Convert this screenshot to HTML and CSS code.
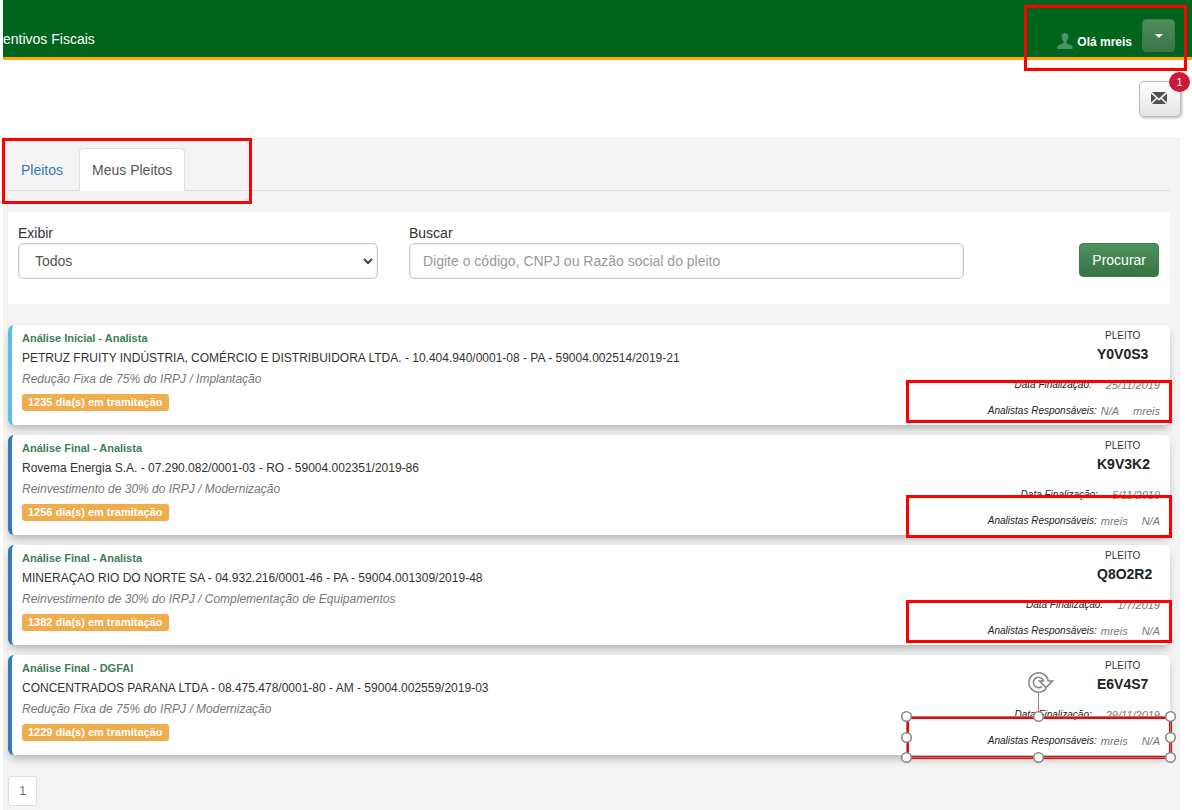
FILE: index.html
```html
<!DOCTYPE html>
<html lang="pt-BR">
<head>
<meta charset="utf-8">
<title>Incentivos Fiscais - Meus Pleitos</title>
<link rel="stylesheet" href="styles.css">
</head>
<body>
<header class="topbar">
  <span class="brand">entivos Fiscais</span>
  <div class="user">
    <svg class="user-icon" viewBox="0 0 16 16" aria-hidden="true"><path d="M8 0C5.700 0 4.600 1.600 4.700 3.800C4.800 5.800 5.600 7.300 6.400 8.200V10C6.300 11 1 11.500 .4 13.500V16H15.600V13.500C15 11.500 9.700 11 9.600 10V8.200C10.400 7.300 11.200 5.800 11.300 3.800C11.400 1.600 10.300 0 8 0Z"/></svg>
    <span class="hello">Olá mreis</span>
    <button class="user-menu" type="button" aria-label="Menu do usuário"><span class="caret"></span></button>
  </div>
  <div class="mark mark-user"></div>
</header>

<div class="tools">
  <button class="mail" type="button" aria-label="Mensagens">
    <svg viewBox="0 0 16 14" aria-hidden="true"><path d="M1 1H15L8 7.500ZM0 2.500L5 7L0 11.500ZM16 2.500L11 7L16 11.500ZM1 13L6 8L8 9.800L10 8L15 13Z"/></svg>
    <span class="badge">1</span>
  </button>
</div>

<main class="panel">
  <nav class="tabs">
    <a class="tab" href="#pleitos">Pleitos</a>
    <a class="tab active" href="#meus" aria-current="page">Meus Pleitos</a>
    <div class="mark mark-tabs"></div>
  </nav>

  <form class="filter">
    <div class="cell">
      <label for="exibir">Exibir</label>
      <div class="select-wrap">
        <select class="field" id="exibir"><option>Todos</option></select>
        <svg class="chevron" viewBox="0 0 10 7" aria-hidden="true"><path d="M1 1L5 5L9 1"/></svg>
      </div>
    </div>
    <div class="cell">
      <label for="buscar">Buscar</label>
      <input class="field" id="buscar" type="text" placeholder="Digite o código, CNPJ ou Razão social do pleito">
    </div>
    <div class="cell action">
      <button class="search" type="button">Procurar</button>
    </div>
  </form>

  <section class="cards">
    <article class="card initial">
      <div class="info">
        <div class="status">Análise Inicial - Analista</div>
        <div class="company">PETRUZ FRUITY INDÚSTRIA, COMÉRCIO E DISTRIBUIDORA LTDA. - 10.404.940/0001-08 - PA - <span class="process">59004.002514/2019-21</span></div>
        <div class="kind">Redução Fixa de 75% do IRPJ / Implantação</div>
        <span class="days">1235 dia(s) em tramitação</span>
      </div>
      <div class="side">
        <div class="code-title">PLEITO</div>
        <div class="code">Y0V0S3</div>
        <div class="meta date"><span class="key">Data Finalização:</span><span>25/11/2019</span></div>
        <div class="meta people"><span class="key">Analistas Responsáveis:</span><span>N/A</span><span class="second">mreis</span></div>
      </div>
      <div class="mark mark-card high"></div>
    </article>

    <article class="card">
      <div class="info">
        <div class="status">Análise Final - Analista</div>
        <div class="company">Rovema Energia S.A. - 07.290.082/0001-03 - RO - <span class="process">59004.002351/2019-86</span></div>
        <div class="kind">Reinvestimento de 30% do IRPJ / Modernização</div>
        <span class="days">1256 dia(s) em tramitação</span>
      </div>
      <div class="side">
        <div class="code-title">PLEITO</div>
        <div class="code">K9V3K2</div>
        <div class="meta date"><span class="key">Data Finalização:</span><span>5/11/2019</span></div>
        <div class="meta people"><span class="key">Analistas Responsáveis:</span><span>mreis</span><span class="second">N/A</span></div>
      </div>
      <div class="mark mark-card low"></div>
    </article>

    <article class="card">
      <div class="info">
        <div class="status">Análise Final - Analista</div>
        <div class="company">MINERAÇAO RIO DO NORTE SA - 04.932.216/0001-46 - PA - <span class="process">59004.001309/2019-48</span></div>
        <div class="kind">Reinvestimento de 30% do IRPJ / Complementação de Equipamentos</div>
        <span class="days">1382 dia(s) em tramitação</span>
      </div>
      <div class="side">
        <div class="code-title">PLEITO</div>
        <div class="code">Q8O2R2</div>
        <div class="meta date"><span class="key">Data Finalização:</span><span>1/7/2019</span></div>
        <div class="meta people"><span class="key">Analistas Responsáveis:</span><span>mreis</span><span class="second">N/A</span></div>
      </div>
      <div class="mark mark-card high"></div>
    </article>

    <article class="card">
      <div class="info">
        <div class="status">Análise Final - DGFAI</div>
        <div class="company">CONCENTRADOS PARANA LTDA - 08.475.478/0001-80 - AM - <span class="process">59004.002559/2019-03</span></div>
        <div class="kind">Redução Fixa de 75% do IRPJ / Modernização</div>
        <span class="days">1229 dia(s) em tramitação</span>
      </div>
      <div class="side">
        <div class="code-title">PLEITO</div>
        <div class="code">E6V4S7</div>
        <div class="meta date"><span class="key">Data Finalização:</span><span>29/11/2019</span></div>
        <div class="meta people"><span class="key">Analistas Responsáveis:</span><span>mreis</span><span class="second">N/A</span></div>
      </div>
      <svg class="selection" viewBox="0 0 276 96" aria-hidden="true">
        <rect class="sel-red" x="7.500" y="49.500" width="263" height="40"/>
        <path class="sel-line" d="M6 48.500H270.500V89.500H6.500V48.500M138.500 24V48"/>
        <g class="handles">
          <circle cx="6.500" cy="48.500" r="4.800"/><circle cx="138.500" cy="48.500" r="4.800"/><circle cx="270.500" cy="48.500" r="4.800"/>
          <circle cx="6.500" cy="69.500" r="4.800"/><circle cx="270.500" cy="69.500" r="4.800"/>
          <circle cx="6.500" cy="89.500" r="4.800"/><circle cx="138.500" cy="89.500" r="4.800"/><circle cx="270.500" cy="89.500" r="4.800"/>
        </g>
        <circle class="rot-base" cx="138.500" cy="14.500" r="7.500"/>
        <path class="rot" d="M146.300 20.500A9.700 9.700 0 1 1 148.200 13H152.500L146 19.500L139.500 13H143.500A5.200 5.200 0 1 0 142 18.300"/>
      </svg>
    </article>
  </section>

  <nav class="pages" aria-label="Paginação"><a class="page" href="#1">1</a></nav>
</main>
</body>
</html>
```
FILE: styles.css
```css
* { box-sizing: border-box; }

body {
  margin: 0;
  padding-left: 3px;
  min-height: 100vh;
  display: flex;
  flex-direction: column;
  background: #fff;
  color: #333;
  font: 14px/20px "Liberation Sans", Arial, sans-serif;
}

button { font: inherit; cursor: pointer; }

.topbar {
  position: relative;
  display: flex;
  justify-content: space-between;
  align-items: flex-start;
  padding: 19px 17px 5px 0;
  background: #00641c;
  border-bottom: 3px solid #fa0;
  color: #fff;
}
.brand { padding-top: 10px; }
.user { display: flex; align-items: flex-start; }
.user-icon { width: 16px; height: 16px; margin: 14px 4px 0 0; fill: #4b9461; }
.hello { padding-top: 13px; font-size: 12px; font-weight: bold; }
.user-menu {
  width: 33px;
  height: 33px;
  margin-left: 10px;
  padding: 0;
  border: 1px solid #3e7d4b;
  border-radius: 4px;
  background: linear-gradient(#4d8e5b, #3b7547);
}
.caret {
  display: block;
  width: 8px;
  margin: 0 auto;
  border: 4px solid transparent;
  border-top-color: #fff;
  border-bottom: 0;
}

/* Red highlight frames laid over the page */
.mark { position: absolute; border: 3px solid #f00; pointer-events: none; z-index: 2; }
.mark-user { right: 5px; top: 5px; width: 163px; height: 66px; }
.mark-tabs { left: -6px; top: -10px; width: 250px; height: 66px; }
.mark-card { right: -2px; width: 266px; height: 43px; }
.mark-card.high { top: 55px; }
.mark-card.low { top: 60px; }

.tools { display: flex; justify-content: flex-end; padding: 21px 11px 20px 0; }
.mail {
  position: relative;
  width: 42px;
  height: 36px;
  padding: 0 2px 2px 0;
  border: 1px solid #bbb;
  border-radius: 5px;
  background: linear-gradient(#fff, #e4e4e4);
  box-shadow: 1px 1px 3px rgba(0, 0, 0, .3);
}
.mail svg { display: block; width: 16px; height: 14px; margin: 0 auto; fill: #505056; }
.badge {
  position: absolute;
  top: -10px;
  right: -10px;
  width: 21px;
  height: 20px;
  border-radius: 50%;
  background: #cb1a36;
  color: #fff;
  font-size: 11px;
  line-height: 20px;
}

.panel { flex: 1; margin-right: 12px; padding: 11px 10px 4px 5px; background: #f4f4f4; }

.tabs { position: relative; display: flex; border-bottom: 1px solid #ddd; }
.tab {
  padding: 11px 12px 10px;
  border: 1px solid transparent;
  border-bottom: 0;
  border-radius: 4px 4px 0 0;
  line-height: 20px;
  color: #337ab7;
  text-decoration: none;
}
.tab.active { margin: 0 0 -1px 3px; border-color: #ddd; background: #fff; color: #555; }

.filter {
  display: grid;
  grid-template-columns: 360fr 555fr 164fr;
  gap: 31px;
  margin-top: 21px;
  padding: 11px 11px 25px 10px;
  background: #fff;
}
.cell { min-width: 0; }
.cell label { display: block; }
.select-wrap { position: relative; }
.field {
  display: block;
  width: 100%;
  height: 36px;
  padding: 0 13px;
  border: 1px solid #ccc;
  border-radius: 5px;
  background: #fff;
  box-shadow: inset 0 0 1px 1px #eee;
  color: #555;
  font: inherit;
  appearance: none;
}
select.field { padding: 0 16px; }
.field::placeholder { color: #999; opacity: 1; }
.chevron {
  position: absolute;
  right: 5px;
  top: 15px;
  width: 10px;
  height: 7px;
  fill: none;
  stroke: #444;
  stroke-width: 2;
  pointer-events: none;
}
.action { display: flex; justify-content: flex-end; padding-top: 20px; }
.search {
  height: 34px;
  padding: 0 12px;
  border: 1px solid #3f7f4c;
  border-radius: 4px;
  background: linear-gradient(#4f9260, #38733f);
  color: #fff;
}

.cards { display: grid; gap: 10px; margin-top: 21px; }
.card {
  position: relative;
  display: flex;
  justify-content: space-between;
  min-height: 100px;
  padding: 3px 10px 0 10px;
  border-left: 4px solid #337ab7;
  border-radius: 6px;
  background: #fff;
  box-shadow: 0 5px 10px -2px rgba(0, 0, 0, .3);
}
.card.initial { border-left-color: #5bc0de; }
.info { padding-top: 2px; }
.status { font-size: 11px; font-weight: bold; line-height: 16px; color: #3c8058; }
.company { margin-top: 2px; font-size: 12px; }
.kind { margin-top: 1px; font-size: 12px; font-style: italic; color: #777; }
.days {
  display: inline-block;
  margin-top: 5px;
  padding: 0 6px;
  border-radius: 3px;
  background: #f0ad4e;
  color: #fff;
  font-size: 11px;
  font-weight: bold;
  line-height: 17px;
}

.side { display: flex; flex-direction: column; align-items: flex-end; }
.code-title { width: 55px; font-size: 10px; line-height: 16px; }
.code { width: 63px; margin-bottom: 8px; font-weight: bold; color: #222; white-space: nowrap; }
.meta { display: flex; font-size: 11px; line-height: 26px; font-style: italic; color: #777; }
.key { margin-right: 4px; font-size: 10px; color: #222; }
.date .key { margin-right: 14px; }
.second { margin-left: 14px; }

.selection { position: absolute; right: -6px; top: 13px; width: 276px; height: 96px; z-index: 2; pointer-events: none; }
.sel-red { fill: none; stroke: #f00; stroke-width: 3; }
.sel-line { fill: none; stroke: #888; stroke-width: 1; }
.handles { fill: #fff; stroke: #888; stroke-width: 1.6; }
.rot-base { fill: none; stroke: #fff; stroke-width: 4; }
.rot { fill: none; stroke: #888; stroke-width: 1.6; }

.pages { display: flex; margin-top: 21px; }
.page {
  padding: 4px 10px;
  border: 1px solid #ddd;
  border-radius: 3px;
  background: #fff;
  color: #777;
  font-size: 13px;
  text-decoration: none;
}
```
